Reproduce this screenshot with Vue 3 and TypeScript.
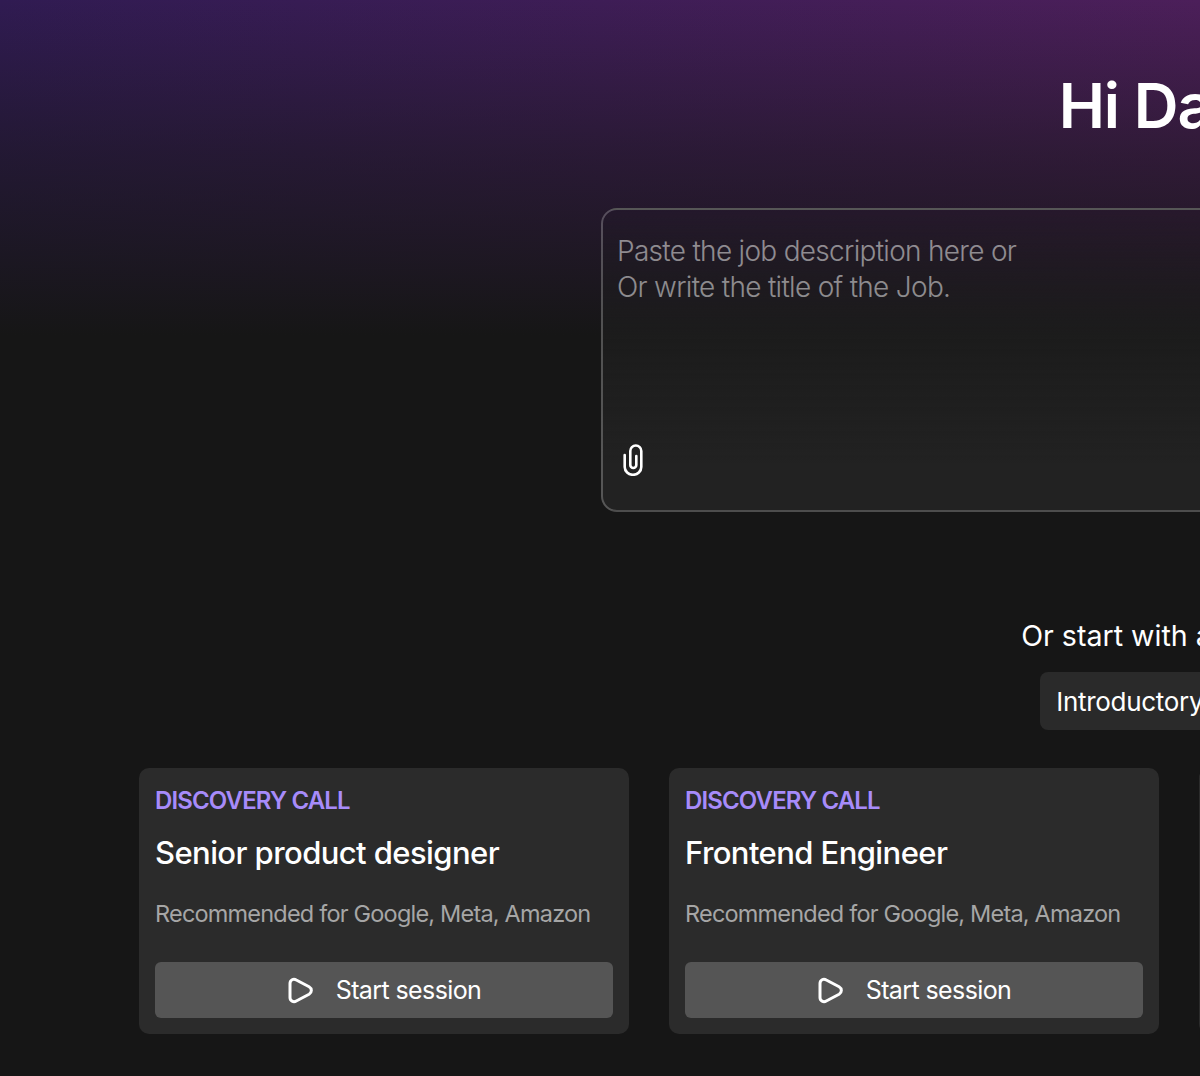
<template>
  <div class="viewport">
    <main class="page">
      <h1 class="greeting">Hi David</h1>

      <div class="job-box">
        <textarea
          class="job-input"
          placeholder="Paste the job description here or&#10;Or write the title of the Job."
        ></textarea>
        <button class="attach-btn" type="button" aria-label="Attach file">
          <svg width="24" height="32" viewBox="0 0 24 32" fill="none" stroke="currentColor" stroke-width="2.6" stroke-linecap="round">
            <path d="M3.7 11v12a8.300 7.800 0 0 0 16.600 0V7a5.500 5.500 0 0 0-11 0v14a3 3 0 0 0 6 0v-9" />
          </svg>
        </button>
      </div>

      <p class="or-start">Or start with a template</p>

      <div class="chips">
        <button v-for="chip in chips" :key="chip" class="chip" type="button">{{ chip }}</button>
      </div>

      <section class="cards">
        <article v-for="card in cards" :key="card.title" class="card">
          <div class="card-type">{{ card.type }}</div>
          <h2 class="card-title">{{ card.title }}</h2>
          <p class="card-desc">{{ card.desc }}</p>
          <button class="start-btn" type="button">
            <svg width="27" height="28" viewBox="0 0 27 28" fill="none" stroke="currentColor" stroke-width="3" stroke-linejoin="round">
              <path d="M3 7.500c0-3.600 3.500-5.200 6.300-3.500l12.800 6.800c3 1.800 3 5.600 0 7.400L9.300 25c-2.800 1.600-6.300 0-6.300-3.500z" />
            </svg>
            <span>Start session</span>
          </button>
        </article>
      </section>
    </main>
  </div>
</template>

<script setup lang="ts">
interface TemplateCard {
  type: string;
  title: string;
  desc: string;
}

const chips: string[] = ['Introductory session'];

const cards: TemplateCard[] = [
  { type: 'DISCOVERY CALL', title: 'Senior product designer', desc: 'Recommended for Google, Meta, Amazon' },
  { type: 'DISCOVERY CALL', title: 'Frontend Engineer', desc: 'Recommended for Google, Meta, Amazon' },
  { type: 'DISCOVERY CALL', title: 'Backend Engineer', desc: 'Recommended for Google, Meta, Amazon' },
  { type: 'DISCOVERY CALL', title: 'Product Manager', desc: 'Recommended for Google, Meta, Amazon' }
];
</script>

<style scoped>
.viewport {
  width: 100vw;
  height: 100vh;
  overflow: hidden;
  background: #161616;
}

.page {
  width: 2358px;
  height: 1076px;
  box-sizing: border-box;
  padding: 68px 139px 0;
  display: flex;
  flex-direction: column;
  align-items: center;
  font-family: Inter, "Liberation Sans", sans-serif;
  color: #fff;
  background:
    linear-gradient(to bottom, rgba(22, 22, 22, 0) 0, rgba(22, 22, 22, 0.5) 150px, #161616 335px),
    linear-gradient(to right, #301b52 0, #4c1f5a 1200px, #4c1f5a 100%);
}

.greeting {
  margin: 0;
  font-size: 62px;
  line-height: 76px;
  font-weight: 600;
  letter-spacing: -1px;
}

.job-box {
  margin-top: 64px;
  width: 1156px;
  height: 304px;
  box-sizing: border-box;
  border: 2px solid rgba(255, 255, 255, 0.24);
  border-radius: 16px;
  background: linear-gradient(to bottom, rgba(34, 34, 34, 0), #222222 85%);
  display: flex;
  flex-direction: column;
  padding: 23px 14px 34px;
}

.job-input {
  flex: 1;
  display: block;
  border: none;
  outline: none;
  resize: none;
  padding: 0;
  background: transparent;
  color: #fff;
  font-family: inherit;
  font-size: 28px;
  line-height: 36px;
  font-weight: 300;
  letter-spacing: -0.7px;
}

.job-input::placeholder {
  color: rgba(255, 255, 255, 0.5);
}

.attach-btn {
  align-self: flex-start;
  width: 32px;
  height: 32px;
  padding: 0;
  border: none;
  background: none;
  color: #fff;
  display: flex;
  align-items: center;
  justify-content: center;
}

.or-start {
  margin: 106px 0 0;
  font-size: 28.6px;
  line-height: 36px;
  font-weight: 400;
}

.chips {
  margin-top: 18px;
  display: flex;
  gap: 16px;
}

.chip {
  height: 58px;
  padding: 0 16px;
  border: none;
  border-radius: 8px;
  background: #2a2a2a;
  color: #fff;
  font-family: inherit;
  font-size: 26px;
  letter-spacing: -0.3px;
}

.cards {
  margin-top: 38px;
  display: grid;
  grid-template-columns: repeat(4, 490px);
  gap: 40px;
}

.card {
  height: 266px;
  box-sizing: border-box;
  padding: 17px 16px 16px;
  border-radius: 10px;
  background: #2b2b2b;
  display: flex;
  flex-direction: column;
}

.card-type {
  font-size: 24px;
  line-height: 32px;
  font-weight: 600;
  color: #a78bfa;
  letter-spacing: -0.85px;
}

.card-title {
  margin: 16px 0 0;
  font-size: 31px;
  line-height: 40px;
  font-weight: 500;
  letter-spacing: -0.58px;
}

.card-desc {
  margin: 25px 0 0;
  font-size: 23.5px;
  line-height: 32px;
  font-weight: 400;
  color: #a6a6a6;
  letter-spacing: -0.8px;
  white-space: nowrap;
}

.start-btn {
  margin-top: auto;
  height: 56px;
  border: none;
  border-radius: 6px;
  background: #555555;
  color: #fff;
  font-family: inherit;
  font-size: 25px;
  letter-spacing: -0.6px;
  display: flex;
  align-items: center;
  justify-content: center;
  gap: 22px;
}
</style>
